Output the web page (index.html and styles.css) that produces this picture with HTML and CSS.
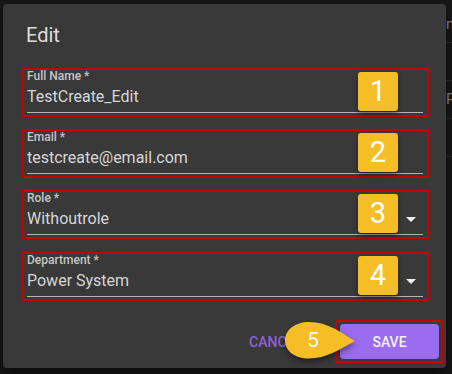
FILE: index.html
```html
<!DOCTYPE html>
<html lang="en">
<head>
    <meta charset="UTF-8">
    <meta name="viewport" content="width=device-width, initial-scale=1.0">
    <title>Edit User</title>
    <link rel="stylesheet" href="styles.css">
</head>
<body>
    <div class="page">
        <div class="page-row">mail</div>
        <div class="page-row"></div>
        <div class="page-row">Power</div>
        <div class="page-row"></div>
    </div>

    <div class="dialog">
        <h2 class="dialog-title">Edit</h2>

        <div class="field-box">
            <div class="field">
                <label class="field-label">Full Name *</label>
                <div class="field-input">
                    <span class="field-value">TestCreate_Edit</span>
                </div>
            </div>
            <span class="badge">1</span>
        </div>

        <div class="field-box">
            <div class="field">
                <label class="field-label">Email *</label>
                <div class="field-input">
                    <span class="field-value">testcreate@email.com</span>
                </div>
            </div>
            <span class="badge">2</span>
        </div>

        <div class="field-box">
            <div class="field">
                <label class="field-label">Role *</label>
                <div class="field-input">
                    <span class="field-value">Withoutrole</span>
                    <span class="arrow"></span>
                </div>
            </div>
            <span class="badge">3</span>
        </div>

        <div class="field-box">
            <div class="field">
                <label class="field-label">Department *</label>
                <div class="field-input">
                    <span class="field-value">Power System</span>
                    <span class="arrow"></span>
                </div>
            </div>
            <span class="badge">4</span>
        </div>

        <div class="actions">
            <button class="btn-cancel">Cancel</button>
            <div class="save-box">
                <button class="btn-save">Save</button>
            </div>
            <div class="callout">
                <svg width="80" height="52" viewBox="0 0 80 52">
                    <path d="M75 25 C 62 17, 48 6, 29 6 C 15 6, 5 14, 5 24.5 C 5 35, 15 42.5, 29 42.5 C 46 42.5, 61 33, 75 25 Z" fill="#f5be27"/>
                </svg>
                <span class="callout-num">5</span>
            </div>
        </div>
    </div>
</body>
</html>
```

FILE: styles.css
```css
body {
    margin: 0;
    background-color: #171717;
    font-family: Roboto, "Liberation Sans", sans-serif;
    width: 452px;
    height: 374px;
    overflow: hidden;
    position: relative;
}
.page {
    padding-left: 446px;
    color: #8c8c8c;
    font-size: 15px;
    overflow: hidden;
}
.page-row {
    height: 37px;
    line-height: 37px;
    border-bottom: 1px solid #2c2c2c;
    white-space: nowrap;
    overflow: hidden;
}
.page-row:first-child {
    height: 42px;
    line-height: 48px;
}
.dialog {
    position: absolute;
    left: 3px;
    top: 4px;
    width: 443px;
    height: 364px;
    box-sizing: border-box;
    padding: 19px 17px 0 19px;
    background-color: #393939;
    border-radius: 4px;
    box-shadow: 0 8px 20px rgba(0, 0, 0, 0.5);
}
.dialog-title {
    margin: 0 0 21px 4px;
    font-size: 20px;
    line-height: 24px;
    font-weight: 400;
    color: #dedede;
}
.field-box {
    position: relative;
    border: 2px solid #c80000;
    padding: 0 4px 2px 3px;
    margin-bottom: 12px;
}
.field-box:nth-of-type(3) {
    margin-bottom: 13px;
}
.field-label {
    display: block;
    font-size: 12px;
    line-height: 12px;
    font-weight: 500;
    color: #c6c6c6;
}
.field-input {
    display: flex;
    align-items: center;
    margin-top: 5px;
    padding-bottom: 5px;
    border-bottom: 1px solid #b4b4b4;
}
.field-value {
    flex: 1;
    font-size: 16px;
    line-height: 20px;
    color: #d6d6d6;
}
.arrow {
    width: 0;
    height: 0;
    margin-right: 7px;
    border-left: 5px solid transparent;
    border-right: 5px solid transparent;
    border-top: 5px solid #f2f2f2;
}
.badge {
    position: absolute;
    top: 2px;
    right: 29px;
    width: 40px;
    height: 39px;
    background-color: #f5be27;
    border-radius: 3px;
    box-shadow: 0 3px 5px rgba(0, 0, 0, 0.45);
    color: #fff;
    font-size: 29px;
    line-height: 39px;
    text-align: center;
}
.actions {
    position: relative;
    display: flex;
    justify-content: flex-end;
    align-items: center;
    margin-top: 19px;
    margin-right: -14px;
}
.btn-cancel {
    background: none;
    border: none;
    padding: 6px 8px;
    margin-right: 25px;
    font-family: inherit;
    font-size: 14px;
    font-weight: 500;
    text-transform: uppercase;
    color: #8b63d6;
}
.save-box {
    border: 2px solid #c80000;
    padding: 2px 2px 2px 3px;
}
.btn-save {
    display: block;
    width: 99px;
    height: 35px;
    background-color: #9b6bf0;
    border: none;
    border-radius: 4px;
    font-family: inherit;
    font-size: 14px;
    font-weight: 500;
    text-transform: uppercase;
    color: #f2f2f2;
}
.callout {
    position: absolute;
    left: 258px;
    top: -4px;
    width: 80px;
    height: 52px;
    filter: drop-shadow(0 3px 3px rgba(0, 0, 0, 0.45));
}
.callout svg {
    display: block;
}
.callout-num {
    position: absolute;
    left: 19px;
    top: 6px;
    width: 28px;
    line-height: 37px;
    text-align: center;
    font-size: 21px;
    color: #fff;
}
```
